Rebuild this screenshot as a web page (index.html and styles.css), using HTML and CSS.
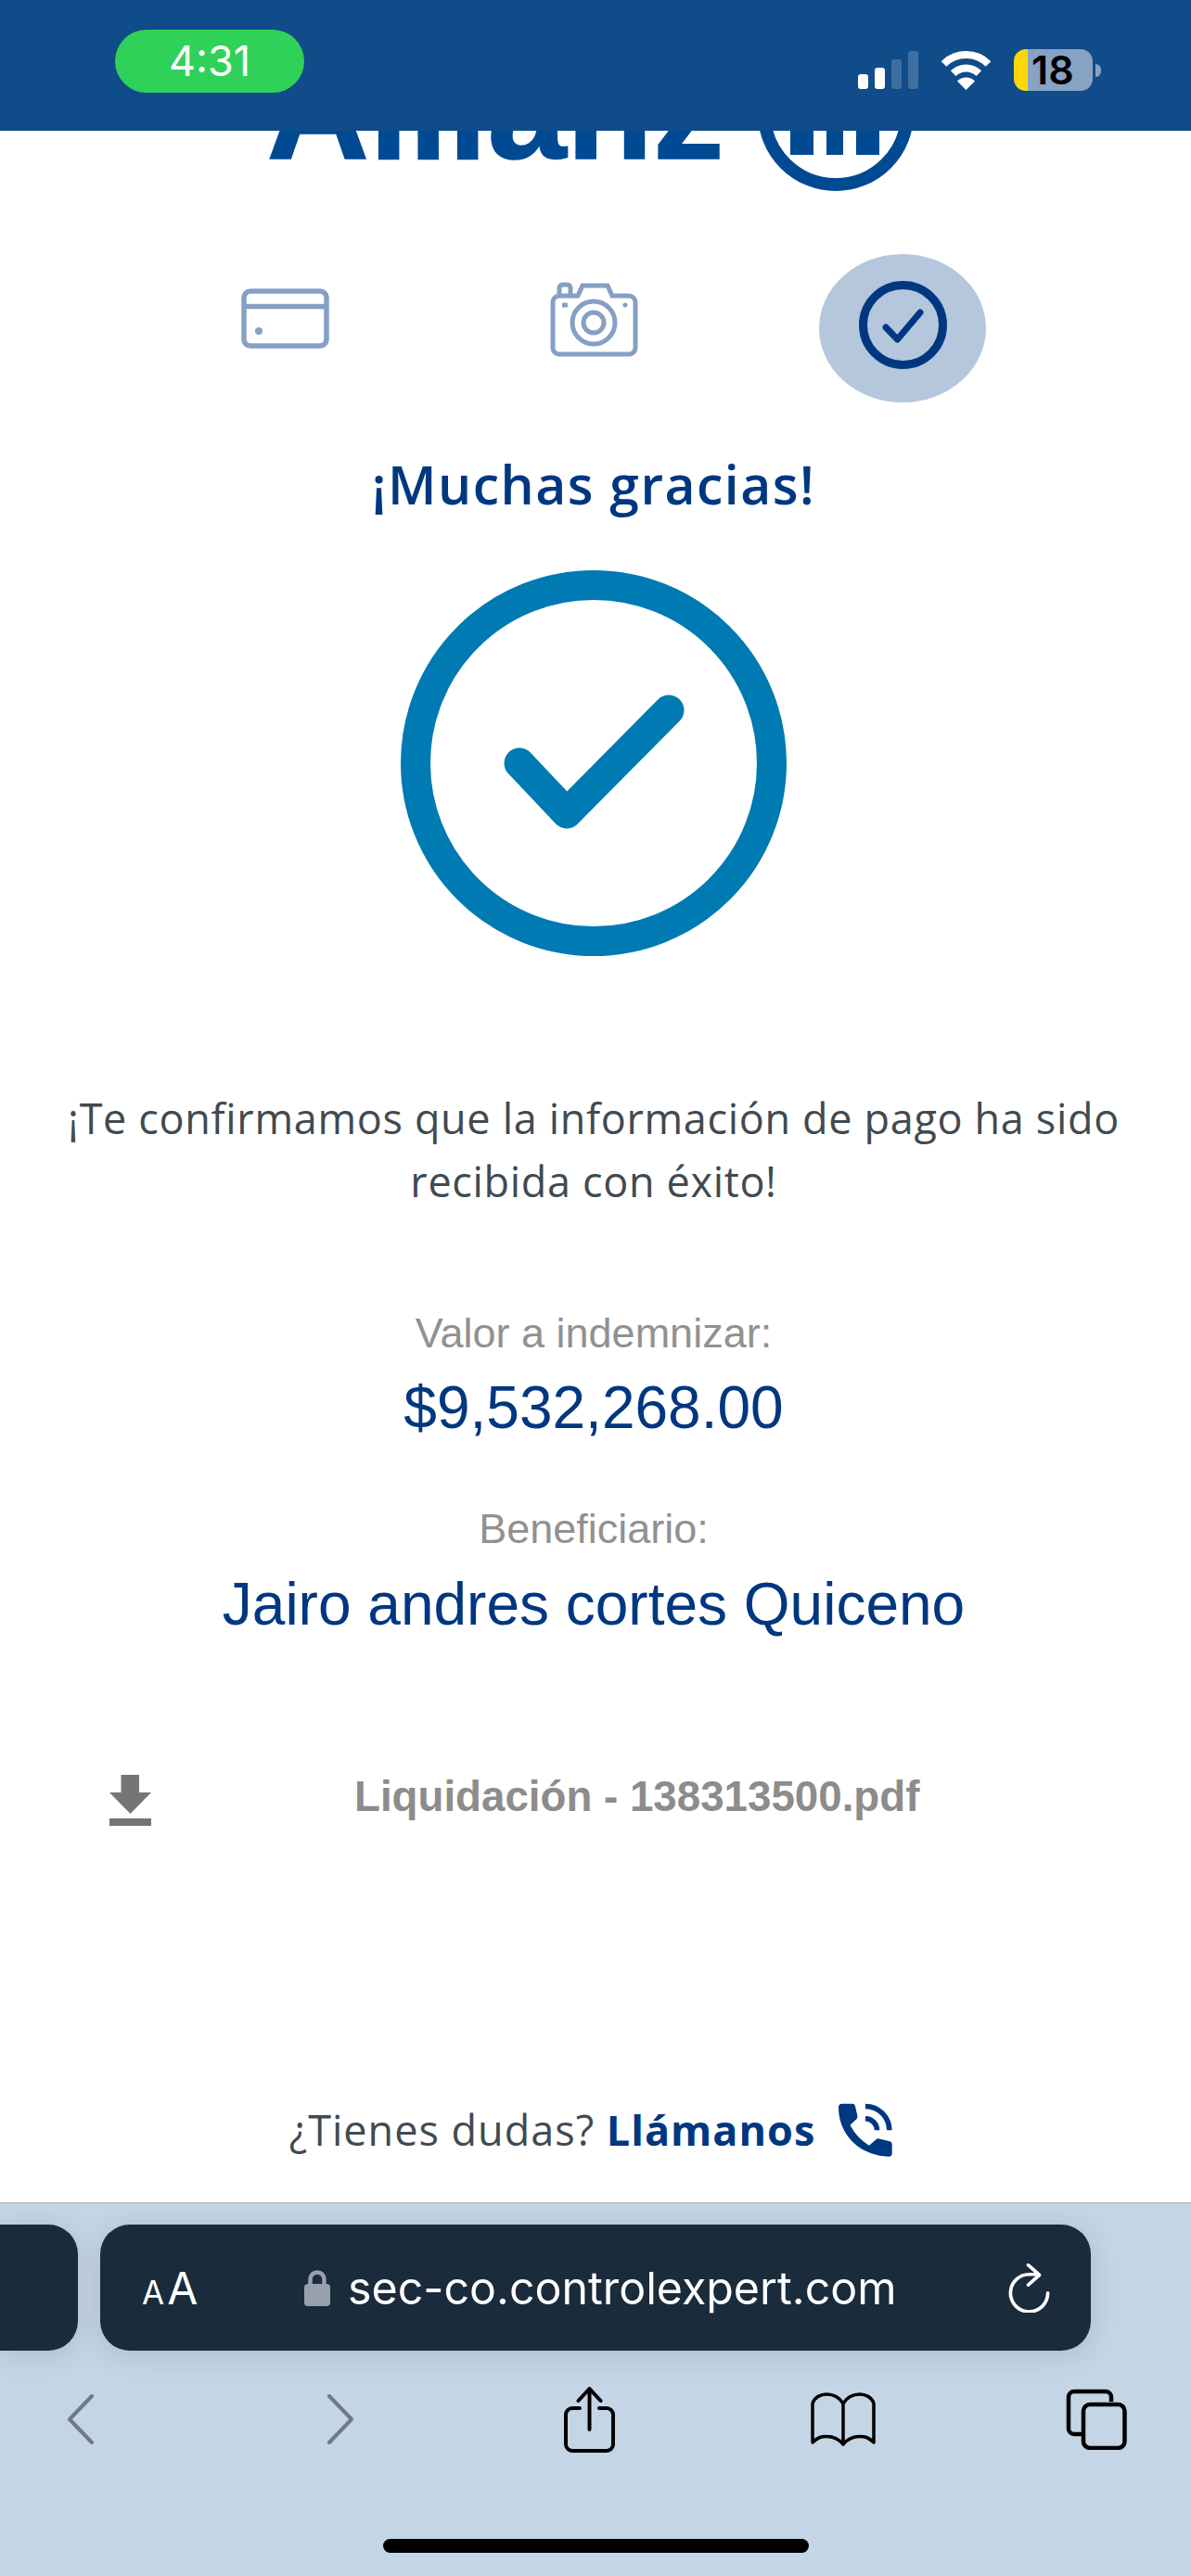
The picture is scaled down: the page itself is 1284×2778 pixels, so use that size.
FILE: index.html
```html
<!DOCTYPE html>
<html lang="es">
<head>
  <meta charset="UTF-8" />
  <meta name="viewport" content="width=device-width, initial-scale=1.0"/>
  <title>Allianz - Pago recibido</title>
  <link rel="stylesheet" href="styles.css">
</head>
<body>

  <!-- Barra de estado -->
  <div class="status-bar">
    <div class="time-pill">4:31</div>
    <div class="status-icons">
      <svg class="signal" width="65" height="41" viewBox="0 0 65 41">
        <rect x="0" y="25" width="11" height="16" rx="3" fill="#fff"/>
        <rect x="18" y="18" width="11" height="23" rx="3" fill="#fff"/>
        <rect x="36" y="9" width="11" height="32" rx="3" fill="#fff" fill-opacity="0.2"/>
        <rect x="54" y="0" width="11" height="41" rx="3" fill="#fff" fill-opacity="0.2"/>
      </svg>
      <svg class="wifi" width="57" height="42" viewBox="0 0 57 42">
        <path d="M4.5 14A34 34 0 0 1 52.5 14" fill="none" stroke="#fff" stroke-width="8"/>
        <path d="M14.7 24.2A19.5 19.5 0 0 1 42.3 24.2" fill="none" stroke="#fff" stroke-width="8"/>
        <path d="M28.5 42L19 32.5A13.4 13.4 0 0 1 38 32.5Z" fill="#fff"/>
      </svg>
      <div class="battery"><span>18</span></div>
      <div class="battery-tip"></div>
    </div>
  </div>

  <div class="page">
    <!-- Logo -->
    <div class="logo">
      <span class="logo-text">Allianz</span>
      <svg width="168" height="168" viewBox="0 0 168 168">
        <circle cx="84" cy="84" r="77" fill="none" stroke="#004a93" stroke-width="14"/>
        <path d="M35 60h25v69H35zM74 40h18v89H74zM106 60h25v69h-25z" fill="#004a93"/>
      </svg>
    </div>

    <!-- Pasos -->
    <div class="steps">
      <div class="step step-card">
        <svg width="95" height="65" viewBox="0 0 95 65" fill="none" stroke="#85a0c4" stroke-width="5.5">
          <rect x="3" y="3" width="89" height="59" rx="7"/>
          <path d="M3 19.5H92"/>
          <circle cx="19" cy="46" r="4" fill="#85a0c4" stroke="none"/>
        </svg>
      </div>
      <div class="step">
        <svg width="95" height="81" viewBox="0 0 95 81" fill="none" stroke="#85a0c4" stroke-width="5">
          <path d="M10 14V6a4 4 0 0 1 4-3h4a4 4 0 0 1 4 3v8"/>
          <path d="M8 15H30L35 4H62L67 15H85a7 7 0 0 1 7 7V71a7 7 0 0 1-7 7H10a7 7 0 0 1-7-7V22a7 7 0 0 1 7-7Z"/>
          <circle cx="47" cy="44" r="23"/>
          <circle cx="47" cy="44" r="11"/>
          <path d="M13 25h6"/>
          <circle cx="81" cy="25" r="2.5" fill="#85a0c4" stroke="none"/>
        </svg>
      </div>
      <div class="step step-active">
        <svg width="95" height="95" viewBox="0 0 95 95" fill="none" stroke="#003781">
          <circle cx="47.5" cy="47.5" r="43" stroke-width="9"/>
          <path d="M29 50L41.5 63L66 34" stroke-width="7" stroke-linecap="round" stroke-linejoin="round"/>
        </svg>
      </div>
    </div>

    <h1 class="title">¡Muchas gracias!</h1>

    <svg class="big-check" width="416" height="416" viewBox="0 0 416 416" fill="none" stroke="#007ab3">
      <circle cx="208" cy="208" r="192" stroke-width="32"/>
      <path d="M128 208L179 262L289 151" stroke-width="33" stroke-linecap="round" stroke-linejoin="round"/>
    </svg>

    <p class="message">¡Te confirmamos que la información de pago ha sido<br>recibida con éxito!</p>

    <div class="label label-first">Valor a indemnizar:</div>
    <div class="value value-first">$9,532,268.00</div>
    <div class="label label-second">Beneficiario:</div>
    <div class="value value-second">Jairo andres cortes Quiceno</div>

    <div class="download">
      <svg width="45" height="55" viewBox="0 0 45 55" fill="#757575">
        <path d="M12.5 0H32V19H45L22.5 42L0 19H12.5Z"/>
        <rect x="0" y="47" width="45" height="8"/>
      </svg>
      <span class="file-name">Liquidación - 138313500.pdf</span>
    </div>

    <div class="help">
      <span>¿Tienes dudas? <b>Llámanos</b></span>
      <svg width="58" height="58" viewBox="72 38 176 176" fill="#003781">
        <path d="M84 40H118Q124 40 126 46L134 80Q135 86 131 90L110 110Q130 150 172 177L195 157Q199 153 205 155L240 163Q247 165 247 172V202Q247 213 236 213C140 210 72 140 72 52Q72 40 84 40Z"/>
        <path d="M160 48.5A78.5 78.5 0 0 1 238.5 127M160 89A38 38 0 0 1 198 127" fill="none" stroke="#003781" stroke-width="17"/>
      </svg>
    </div>
  </div>

  <!-- Barra del navegador -->
  <div class="browser">
    <div class="url-row">
      <div class="tab-stub"></div>
      <div class="url-pill">
        <span class="aa"><small>A</small>A</span>
        <svg class="lock" width="28" height="39" viewBox="0 0 28 39">
          <path d="M6.5 18V10a7.5 7.5 0 0 1 15 0v8" fill="none" stroke="#98a0ad" stroke-width="4.5"/>
          <rect x="0" y="15" width="28" height="24" rx="4" fill="#98a0ad"/>
        </svg>
        <span class="url">sec-co.controlexpert.com</span>
        <svg class="reload" width="45" height="53" viewBox="83 55 134 158" fill="none" stroke="#fff" stroke-width="11" stroke-linecap="round" stroke-linejoin="round">
          <path d="M210 150A60 60 0 1 1 150 90H180"/>
          <path d="M147 60L183 92L147 124"/>
        </svg>
      </div>
    </div>

    <div class="toolbar">
      <svg width="30" height="54" viewBox="0 0 30 54" fill="none" stroke="#6f7a84" stroke-width="4" stroke-linecap="round" stroke-linejoin="round">
        <path d="M27 2L3 27L27 52" />
      </svg>
      <svg width="30" height="54" viewBox="0 0 30 54" fill="none" stroke="#6f7a84" stroke-width="4" stroke-linecap="round" stroke-linejoin="round">
        <path d="M3 2L27 27L3 52" />
      </svg>
      <svg width="55" height="71" viewBox="0 0 55 71" fill="none" stroke="#000" stroke-width="4" stroke-linecap="round" stroke-linejoin="round">
        <path d="M17 23H9a7 7 0 0 0-7 7V62a7 7 0 0 0 7 7H46a7 7 0 0 0 7-7V30a7 7 0 0 0-7-7H38"/>
        <path d="M27.5 46V2M15.5 15L27.5 2L39.5 15"/>
      </svg>
      <svg width="70" height="58" viewBox="0 0 70 58" fill="none" stroke="#000" stroke-width="3.5" stroke-linecap="round" stroke-linejoin="round">
        <path d="M35 12C30 4 23 2 17 2S4 5 2 12V54C8 48 12 47.5 17 47.5C24 47.5 30 50 35 56C40 50 46 47.5 53 47.5C58 47.5 62 48 68 54V12C66 5 59 2 53 2S40 4 35 12Z"/>
        <path d="M35 12V56"/>
      </svg>
      <svg width="66" height="66" viewBox="0 0 66 66" fill="none" stroke="#000" stroke-width="4.5">
        <path d="M49 14V9a6 6 0 0 0-6-6H9a6 6 0 0 0-6 6V43a6 6 0 0 0 6 6h8"/>
        <rect x="19" y="17" width="44.5" height="47" rx="7"/>
      </svg>
    </div>

    <div class="home-indicator"></div>
  </div>

</body>
</html>
```

FILE: styles.css
```css
* {
  box-sizing: border-box;
}
html, body {
  margin: 0;
  padding: 0;
}
body {
  width: 1284px;
  height: 2778px;
  overflow: hidden;
  display: flex;
  flex-direction: column;
  background: #fff;
  font-family: "Liberation Sans", Arial, sans-serif;
}

/* Barra de estado */
.status-bar {
  height: 141px;
  flex: none;
  display: flex;
  justify-content: space-between;
  align-items: flex-start;
  padding: 32px 97px 0 124px;
  background: #0f4c89;
}
.time-pill {
  width: 204px;
  height: 68px;
  border-radius: 34px;
  background: #30d158;
  color: #fff;
  font-family: Inter, sans-serif;
  font-size: 45px;
  line-height: 68px;
  text-align: center;
}
.status-icons {
  display: flex;
  align-items: center;
  margin-top: 21px;
}
.wifi {
  margin-left: 23px;
}
.battery {
  width: 85px;
  height: 45px;
  margin-left: 23px;
  border-radius: 13px;
  background: linear-gradient(to right, #ffd60a 15px, #87a3c4 15px);
  color: #000;
  font-family: Inter, sans-serif;
  font-weight: 600;
  font-size: 43px;
  line-height: 45px;
  padding-left: 19px;
}
.battery-tip {
  width: 6px;
  height: 14px;
  margin-left: 3px;
  border-radius: 0 7px 7px 0;
  background: #87a3c4;
}

/* Contenido */
.page {
  flex: 1;
  display: flex;
  flex-direction: column;
  align-items: center;
  padding-right: 4px;
}
.logo {
  width: 100%;
  height: 65px;
  flex: none;
  overflow: hidden;
  display: flex;
  justify-content: center;
  align-items: flex-end;
  gap: 36px;
  padding-right: 8px;
}
.logo svg {
  flex: none;
}
.logo-text {
  margin-bottom: 38px;
  font-weight: 700;
  font-size: 153px;
  line-height: 100px;
  color: #004a93;
  -webkit-text-stroke: 1.5px #004a93;
}
.steps {
  display: grid;
  grid-template-columns: repeat(3, 333px);
  margin-top: 68px;
  height: 160px;
}
.step {
  display: flex;
  justify-content: center;
  padding-top: 30px;
}
.step-card {
  padding-top: 37px;
}
.step-active {
  justify-self: center;
  width: 180px;
  padding-top: 29px;
  border-radius: 50%;
  background: #b5c7dc;
}
.title {
  margin: 53px 0 0;
  font-family: "Open Sans", sans-serif;
  font-weight: 600;
  font-size: 57px;
  letter-spacing: 1.5px;
  line-height: 70px;
  color: #003781;
}
.big-check {
  flex: none;
  margin-top: 58px;
}
.message {
  margin: 141px 0 0;
  font-family: "Open Sans", sans-serif;
  font-size: 45px;
  letter-spacing: 0.66px;
  line-height: 68px;
  text-align: center;
  color: #414a50;
}
.label {
  font-size: 45px;
  line-height: 60px;
  color: #919191;
}
.label-first {
  margin-top: 100px;
}
.label-second {
  margin-top: 66px;
}
.value {
  font-size: 64px;
  line-height: 70px;
  color: #003781;
}
.value-first {
  margin-top: 15px;
}
.value-second {
  margin-top: 16px;
}
.download {
  width: 100%;
  display: flex;
  align-items: flex-start;
  margin-top: 149px;
  padding-left: 118px;
}
.file-name {
  margin: -2px 0 0 219px;
  font-weight: 700;
  font-size: 45.7px;
  line-height: 52px;
  color: #8c8c8c;
}
.help {
  display: flex;
  align-items: center;
  gap: 25px;
  margin: 298px 6px 0 0;
  font-family: "Open Sans", sans-serif;
  font-size: 45px;
  letter-spacing: 1px;
  line-height: 60px;
  color: #414a50;
}
.help b {
  color: #003781;
}

/* Barra del navegador */
.browser {
  height: 403px;
  flex: none;
  border-top: 1px solid #a7adb5;
  background: #c4d5e6;
}
.url-row {
  display: flex;
  gap: 24px;
  margin-top: 23px;
}
.tab-stub {
  width: 84px;
  height: 136px;
  border-radius: 0 32px 32px 0;
  background: #1a2b3c;
  box-shadow: 0 4px 30px rgba(0, 0, 0, 0.12);
}
.url-pill {
  width: 1068px;
  height: 136px;
  display: flex;
  align-items: center;
  padding-left: 45px;
  border-radius: 32px;
  background: #1a2b3c;
  box-shadow: 0 4px 30px rgba(0, 0, 0, 0.12);
  color: #fff;
}
.aa {
  width: 175px;
  font-family: Inter, sans-serif;
  font-size: 48px;
}
.aa small {
  margin-right: 3px;
  font-size: 35px;
}
.lock {
  flex: none;
}
.url {
  width: 712px;
  margin-left: 19px;
  font-family: Inter, sans-serif;
  font-size: 48.3px;
}
.toolbar {
  display: grid;
  grid-template-columns: 174px 386px 150px 398px 148px;
  justify-items: center;
  align-items: center;
  margin-top: 38px;
  height: 72px;
}
.home-indicator {
  width: 459px;
  height: 15px;
  margin: 93px 0 0 413px;
  border-radius: 8px;
  background: #000;
}
```
